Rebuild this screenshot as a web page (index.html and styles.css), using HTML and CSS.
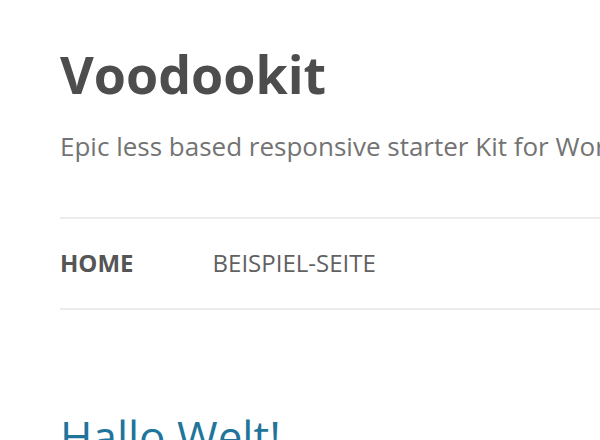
FILE: index.html
```html
<!DOCTYPE html>
<html lang="de">
<head>
<meta charset="utf-8">
<title>Voodookit</title>
<link rel="stylesheet" href="styles.css">
</head>
<body>
<div class="page">
  <header class="site-header">
    <h1 class="site-title">Voodookit</h1>
    <p class="site-description">Epic less based responsive starter Kit for WordPress</p>
  </header>
  <nav class="main-nav">
    <a class="nav-item current" href="#">Home</a>
    <a class="nav-item" href="#">Beispiel-Seite</a>
  </nav>
  <main class="content">
    <h2 class="entry-title">Hallo Welt!</h2>
  </main>
</div>
</body>
</html>
```
FILE: styles.css
```css
html, body {
  margin: 0;
  padding: 0;
  background: #fff;
  overflow: hidden;
}
body {
  font-family: "Open Sans", "Liberation Sans", sans-serif;
  color: #555;
}
.page {
  padding: 0 0 0 60px;
  width: 900px;
}
.site-header {
  padding-top: 42px;
}
.site-title {
  margin: 0;
  font-size: 52px;
  font-weight: 700;
  line-height: 64px;
  color: #4d4d4d;
}
.site-description {
  margin: 23px 0 0;
  font-size: 26px;
  line-height: 34px;
  color: #737373;
  white-space: nowrap;
}
.main-nav {
  margin-top: 54px;
  border-top: 2px solid #ececec;
  border-bottom: 2px solid #ececec;
  height: 93px;
  padding-bottom: 3px;
  box-sizing: border-box;
  display: flex;
  align-items: center;
  gap: 79px;
}
.nav-item {
  font-size: 24px;
  text-transform: uppercase;
  text-decoration: none;
  color: #616161;
}
.nav-item.current {
  font-weight: 700;
  color: #555;
}
.content {
  padding-top: 98px;
}
.entry-title {
  margin: 0;
  font-size: 44px;
  font-weight: 400;
  line-height: 56px;
  color: #21759b;
}
```
